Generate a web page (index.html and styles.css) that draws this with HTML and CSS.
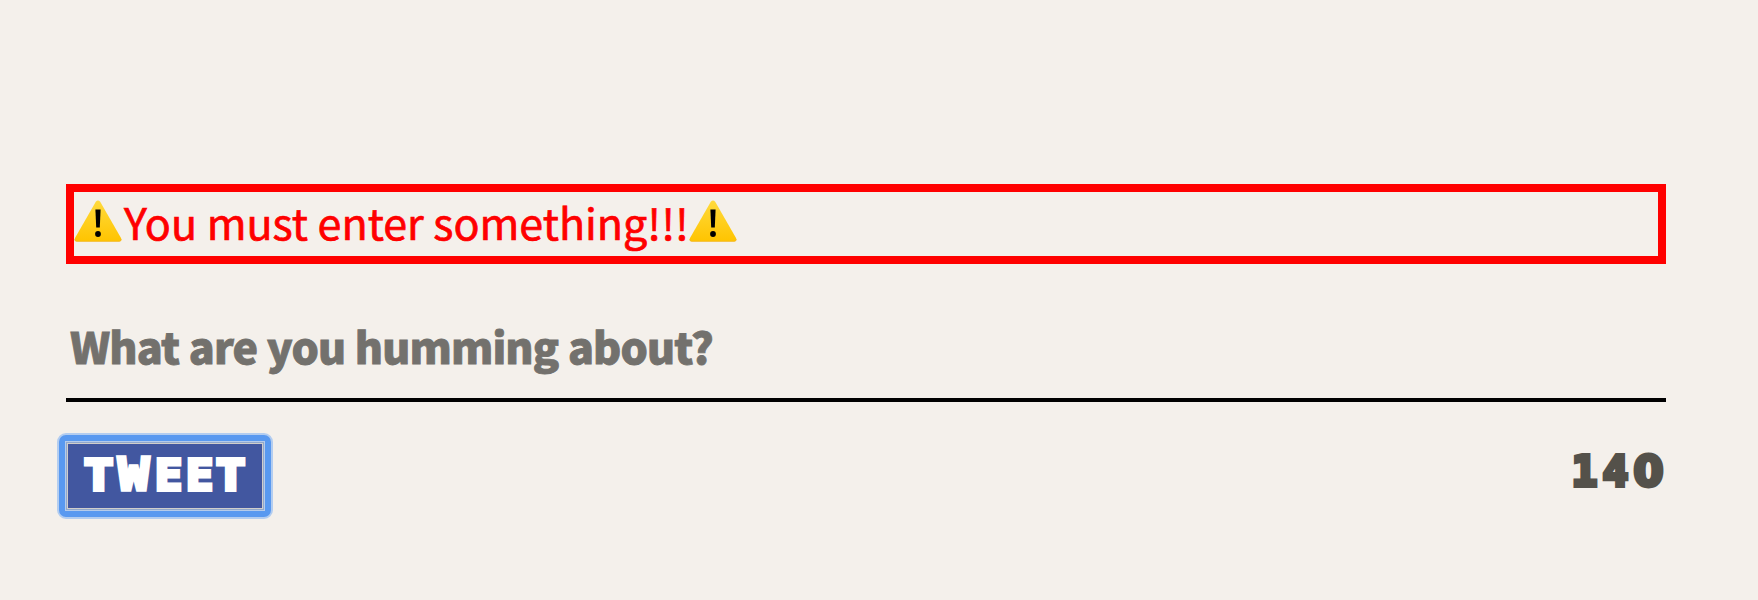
FILE: index.html
```html
<!DOCTYPE html>
<html lang="en">
<head>
<meta charset="utf-8">
<title>Tweet</title>
<link rel="stylesheet" href="styles.css">
</head>
<body>
<svg class="defs" width="0" height="0" aria-hidden="true">
  <defs>
    <linearGradient id="sign" x1="0" y1="0" x2="0" y2="1"><stop offset="0" stop-color="#ffda3d"/><stop offset="1" stop-color="#ffc400"/></linearGradient>
    <symbol id="warning" viewBox="0 0 48 42">
      <path d="M21.8 1.8Q24-.9 26.2 1.8L47 38Q48.4 41.3 45.3 41.5H2.7Q-.4 41.3 1 38Z" fill="url(#sign)"/>
      <path d="M1 39Q.6 41.3 2.7 41.3H45.3Q47.4 41.3 47 39" fill="none" stroke="#f2b62c" stroke-width=".8"/>
      <path d="M21.4 9.5H26.6L25.8 27.5H22.2Z"/><circle cx="24" cy="34" r="2.9"/>
    </symbol>
  </defs>
</svg>
<main class="composer">
  <div class="error"><svg class="icon"><use href="#warning"/></svg><span class="message">You must enter something!!!</span><svg class="icon"><use href="#warning"/></svg></div>
  <div class="field"><span class="placeholder">What are you humming about?</span></div>
  <div class="actions">
    <div class="focus-ring"><button class="submit" type="button"><span class="t">T</span><span class="w">W</span><span class="e">E</span><span class="e">E</span><span class="t">T</span></button></div>
    <div class="count"><span class="one">1</span><span class="four">4</span><span class="zero">0</span></div>
  </div>
</main>
</body>
</html>
```
FILE: styles.css
```css
* { box-sizing: border-box; }
body { margin: 0; padding-top: 184px; min-height: 600px; background: #f4f0eb; font-family: "Noto Sans CJK SC", sans-serif; }
.defs { display: block; }
.composer { width: 1600px; margin-left: 66px; }
.error { display: flex; height: 80px; border: 8px solid #f00; color: #f00; font-size: 43px; line-height: 58px; white-space: nowrap; }
.icon { width: 48px; height: 42px; margin-top: 8px; flex: none; }
.message { width: 563px; margin-left: 2px; margin-right: 2px; -webkit-text-stroke: 0.7px currentColor; }
.field { height: 138px; border-bottom: 4px solid #000; padding: 49px 4px 0; }
.placeholder { display: block; color: #73716d; font-size: 43px; font-weight: 900; line-height: 64px; letter-spacing: -0.86px; word-spacing: 0.5px; white-space: nowrap; -webkit-text-stroke: 0.8px currentColor; }
.actions { display: flex; justify-content: space-between; padding-top: 31px; }
.focus-ring { margin-left: -9px; padding: 9px; border: 2px solid #b3cdf0; border-radius: 9px; background: #5999f0; }
.submit { display: flex; align-items: center; justify-content: center; width: 194px; height: 64px; padding: 0 1px 3px 0; border: 0; background: #4257a0; color: #fff; box-shadow: 0 0 0 1px #d0cecb, 0 0 0 2px #91a8cc, 0 0 0 3px #b5cbea; }
.submit, .count { font-family: "DejaVu Sans Mono", monospace; font-weight: 700; font-size: 43px; line-height: 44px; -webkit-text-stroke: 4px currentColor; stroke-linejoin: round; paint-order: stroke fill; }
.count { display: flex; margin-top: 16px; color: #54514a; }
.submit span, .count span { display: block; text-align: center; }
.t { width: 31.5px; transform: scaleX(1.13); }
.submit .w { width: 39px; -webkit-text-stroke-width: 3.2px; transform: scale(1.2, 1.02); }
.e { width: 31px; transform: scaleX(1.05); }
.one, .four { width: 31px; transform: translateX(-2px); }
.zero { width: 33px; font-family: "DejaVu Sans", sans-serif; transform: translateX(-1px); }
```
